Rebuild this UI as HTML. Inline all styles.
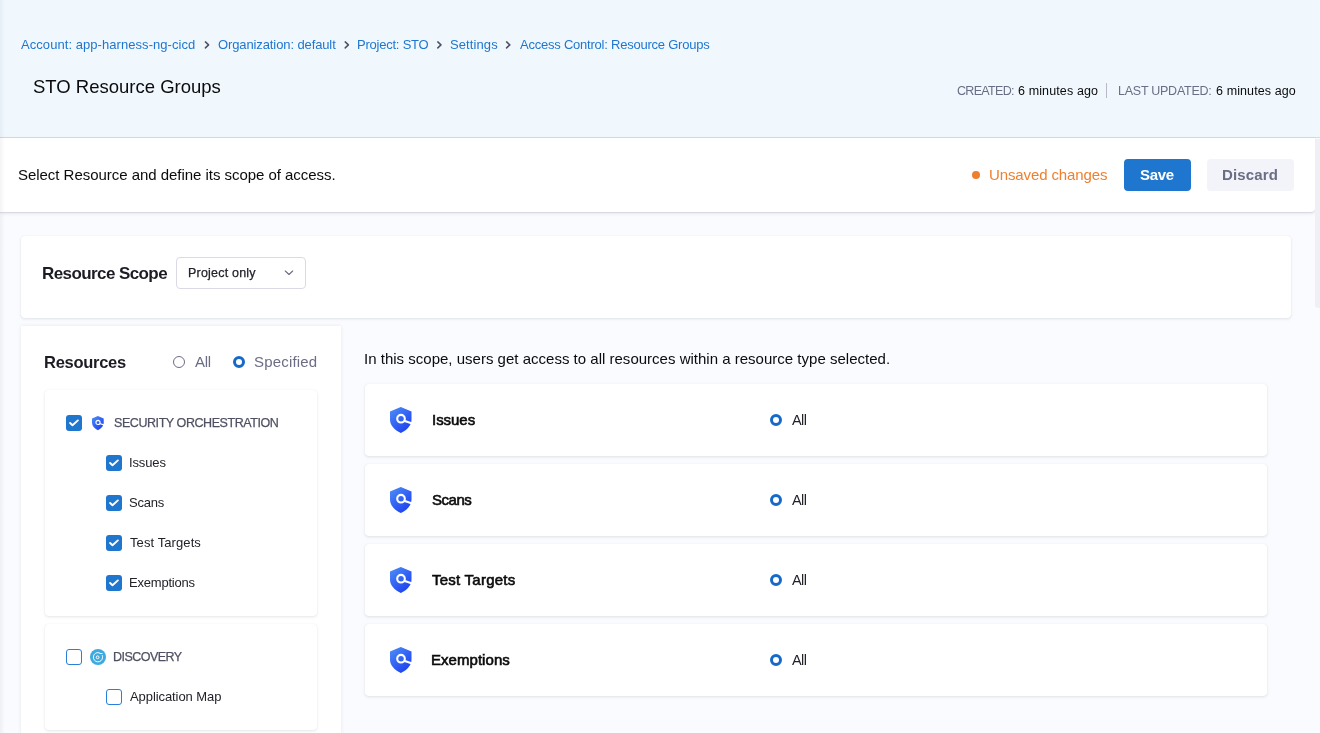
<!DOCTYPE html>
<html><head><meta charset="utf-8">
<style>
*{box-sizing:border-box;margin:0;padding:0}
html,body{width:1320px;height:733px;overflow:hidden}
body{position:relative;background:#f9fbfe;font-family:"Liberation Sans",sans-serif;color:#22222a}
.a{position:absolute;white-space:nowrap;line-height:1}
.t{position:absolute;white-space:nowrap;line-height:1;font-family:"Liberation Sans",sans-serif;will-change:transform}
svg{position:absolute;overflow:visible}
#hdr{position:absolute;left:0;top:0;width:1320px;height:138px;background:#f0f8fe;border-bottom:1px solid #d9dae6}
#bar{position:absolute;left:0;top:138px;width:1315px;height:74px;background:#fff;border-radius:0 0 4px 0;box-shadow:0 2px 4px rgba(40,41,61,.06),0 0.5px 1.5px rgba(96,97,112,.18)}
#sb{position:absolute;left:1315px;top:139px;width:6px;height:169px;background:#efeff5;border-radius:0 0 3px 3px}
.card{position:absolute;background:#fff;border-radius:4px;box-shadow:0 0 1px rgba(40,41,61,.06),0 1px 3px rgba(96,97,112,.16)}
.cb{position:absolute;width:16px;height:16px;border-radius:3px;background:#1f76cf}
.cbo{position:absolute;width:16px;height:16px;border-radius:3px;border:1px solid #2a7fd6;background:#fff}
.rad{position:absolute;width:12px;height:12px;border-radius:50%;border:3.6px solid #1769c9;background:#fff}
.rado{position:absolute;width:12px;height:12px;border-radius:50%;border:1px solid #6b6d85;background:#fff}
</style></head>
<body>
<div id="hdr"></div>
<div class="a" style="left:0;top:0;width:5px;height:733px;background:linear-gradient(to right,rgba(40,41,61,.05),rgba(40,41,61,0));z-index:5"></div>
<svg style="left:0;top:0" width="1" height="1">
<defs>
<linearGradient id="sg" x1="0" y1="0" x2="0.75" y2="1"><stop offset="0" stop-color="#4d90f8"/><stop offset="1" stop-color="#1d3ff0"/></linearGradient>
</defs></svg>
<svg style="left:0;top:0" width="1320" height="60">
<g fill="none" stroke="#4f5162" stroke-width="1.5" stroke-linecap="round" stroke-linejoin="round">
<path d="M205.4 41.9 L208.6 44.9 L205.4 47.9"/>
<path d="M345.2 41.9 L348.4 44.9 L345.2 47.9"/>
<path d="M437.8 41.9 L441 44.9 L437.8 47.9"/>
<path d="M506.6 41.9 L509.8 44.9 L506.6 47.9"/>
</g></svg>
<div class="a" style="left:1106px;top:83px;width:1px;height:15px;background:#b7b8c8"></div>

<div id="bar"></div>
<div id="sb"></div>
<div class="a" style="left:972px;top:171px;width:8px;height:8px;border-radius:50%;background:#ee7f2f"></div>
<div class="a" style="left:1124px;top:159px;width:67px;height:32px;background:#1f76cf;border-radius:4px"></div>
<div class="a" style="left:1207px;top:159px;width:87px;height:32px;background:#f3f3fa;border-radius:4px"></div>

<!-- scope card -->
<div class="card" style="left:21px;top:236px;width:1270px;height:82px"></div>
<div class="a" style="left:176px;top:257px;width:130px;height:32px;border:1px solid #d9dae6;border-radius:4px;background:#fff"></div>
<svg style="left:0;top:0" width="1" height="1"><path d="M285.3 271 L289 274.5 L292.7 271" fill="none" stroke="#6b6d85" stroke-width="1.1" stroke-linecap="round" stroke-linejoin="round"/></svg>

<!-- resources panel -->
<div class="a" style="left:21px;top:326px;width:320px;height:420px;background:#fff;box-shadow:0 0 4px rgba(40,41,61,.07),0 0 1px rgba(40,41,61,.06)"></div>
<div class="rado" style="left:173px;top:356px"></div>
<div class="rad" style="left:233px;top:356px"></div>

<div class="card" style="left:45px;top:390px;width:272px;height:226px"></div>
<div class="cb" style="left:66px;top:415px"><svg style="left:0;top:0" width="16" height="16"><path d="M4.1 8 L6.5 10.3 L11.9 5.4" fill="none" stroke="#fff" stroke-width="1.9" stroke-linecap="round" stroke-linejoin="round"/></svg></div>
<svg style="left:92px;top:415.8px" width="12" height="14.2" viewBox="0 0 22 26"><use href="#shield"/></svg>
<div class="cb" style="left:106px;top:455px"><svg style="left:0;top:0" width="16" height="16"><path d="M4.1 8 L6.5 10.3 L11.9 5.4" fill="none" stroke="#fff" stroke-width="1.9" stroke-linecap="round" stroke-linejoin="round"/></svg></div>
<div class="cb" style="left:106px;top:495px"><svg style="left:0;top:0" width="16" height="16"><path d="M4.1 8 L6.5 10.3 L11.9 5.4" fill="none" stroke="#fff" stroke-width="1.9" stroke-linecap="round" stroke-linejoin="round"/></svg></div>
<div class="cb" style="left:106px;top:535px"><svg style="left:0;top:0" width="16" height="16"><path d="M4.1 8 L6.5 10.3 L11.9 5.4" fill="none" stroke="#fff" stroke-width="1.9" stroke-linecap="round" stroke-linejoin="round"/></svg></div>
<div class="cb" style="left:106px;top:575px"><svg style="left:0;top:0" width="16" height="16"><path d="M4.1 8 L6.5 10.3 L11.9 5.4" fill="none" stroke="#fff" stroke-width="1.9" stroke-linecap="round" stroke-linejoin="round"/></svg></div>

<div class="card" style="left:45px;top:624px;width:272px;height:106px"></div>
<div class="cbo" style="left:66px;top:649px"></div>
<svg style="left:90px;top:649px" width="16" height="16" viewBox="0 0 16 16">
<circle cx="8" cy="8" r="8" fill="#3daae0"/>
<g fill="none" stroke="#fff" stroke-width="1"><path d="M10.2 4.3 A4.5 4.5 0 0 0 3.4 8 A4.5 4.5 0 0 0 12.5 8.6 A4.5 4.5 0 0 0 12.2 6.2"/><circle cx="7.6" cy="8.3" r="1.4"/><path d="M10.3 4.5 L12 4.5" stroke-linecap="round" stroke-width="1.1"/></g>
</svg>
<div class="cbo" style="left:106px;top:689px"></div>

<!-- right cards -->
<div class="card" style="left:365px;top:384px;width:902px;height:72px"></div>
<div class="card" style="left:365px;top:464px;width:902px;height:72px"></div>
<div class="card" style="left:365px;top:544px;width:902px;height:72px"></div>
<div class="card" style="left:365px;top:624px;width:902px;height:72px"></div>
<svg style="left:389.5px;top:406.5px" width="22" height="26" viewBox="0 0 22 26"><use href="#shield"/></svg>
<svg style="left:389.5px;top:486.5px" width="22" height="26" viewBox="0 0 22 26"><use href="#shield"/></svg>
<svg style="left:389.5px;top:566.5px" width="22" height="26" viewBox="0 0 22 26"><use href="#shield"/></svg>
<svg style="left:389.5px;top:646.5px" width="22" height="26" viewBox="0 0 22 26"><use href="#shield"/></svg>
<div class="rad" style="left:770px;top:414px"></div>
<div class="rad" style="left:770px;top:494px"></div>
<div class="rad" style="left:770px;top:574px"></div>
<div class="rad" style="left:770px;top:654px"></div>

<svg style="left:0;top:0" width="1" height="1"><defs>
<g id="shield">
<path d="M10.8 0 L21.5 4.5 V12.5 C21.5 18.3 17.2 23.2 10.8 26 C4.4 23.2 0 18.3 0 12.5 V4.5 Z" fill="url(#sg)"/>
<circle cx="11" cy="11.7" r="3.8" fill="none" stroke="#fff" stroke-width="2.1"/>
<path d="M14 13.8 L23 16.8" stroke="#fff" stroke-width="2.2"/>
</g></defs></svg>
<div class="t" style="left:21.4px;top:38px;font-size:13px;color:#1f76cf;letter-spacing:0.059px">Account: app-harness-ng-cicd</div>
<div class="t" style="left:217.6px;top:38px;font-size:13px;color:#1f76cf;letter-spacing:-0.110px">Organization: default</div>
<div class="t" style="left:356.8px;top:38px;font-size:13px;color:#1f76cf;letter-spacing:-0.227px">Project: STO</div>
<div class="t" style="left:449.6px;top:38px;font-size:13px;color:#1f76cf;letter-spacing:0.100px">Settings</div>
<div class="t" style="left:519.8px;top:38px;font-size:13px;color:#1f76cf;letter-spacing:-0.227px">Access Control: Resource Groups</div>
<div class="t" style="left:32.5px;top:78px;font-size:18.5px;color:#0b0b0d;letter-spacing:0.000px">STO Resource Groups</div>
<div class="t" style="left:956.6px;top:85px;font-size:12.5px;color:#6b6d85;letter-spacing:-0.686px">CREATED:</div>
<div class="t" style="left:1018.0px;top:85px;font-size:12.5px;color:#0b0b0d;letter-spacing:0.125px">6 minutes ago</div>
<div class="t" style="left:1118.4px;top:85px;font-size:12.5px;color:#6b6d85;letter-spacing:-0.250px">LAST UPDATED:</div>
<div class="t" style="left:1216.1px;top:85px;font-size:12.5px;color:#0b0b0d;letter-spacing:0.108px">6 minutes ago</div>
<div class="t" style="left:17.5px;top:167px;font-size:15px;color:#0b0b0d;letter-spacing:-0.037px">Select Resource and define its scope of access.</div>
<div class="t" style="left:989.0px;top:167px;font-size:15px;color:#ee7f2f;letter-spacing:-0.121px">Unsaved changes</div>
<div class="t" style="left:1140.0px;top:167px;font-size:15px;font-weight:bold;color:#ffffff;letter-spacing:-0.333px">Save</div>
<div class="t" style="left:1222.0px;top:167px;font-size:15px;font-weight:bold;color:#6b6d85;letter-spacing:0.167px">Discard</div>
<div class="t" style="left:41.5px;top:265px;font-size:17px;font-weight:bold;color:#1c1c24;letter-spacing:-0.585px">Resource Scope</div>
<div class="t" style="left:187.6px;top:267px;font-size:12.5px;-webkit-text-stroke:0.25px currentColor;color:#22222a;letter-spacing:0.200px">Project only</div>
<div class="t" style="left:44.2px;top:354px;font-size:16.5px;font-weight:bold;color:#1c1c24;letter-spacing:-0.287px">Resources</div>
<div class="t" style="left:195.2px;top:354px;font-size:15px;color:#6b6d85;letter-spacing:-0.350px">All</div>
<div class="t" style="left:254.0px;top:354px;font-size:15px;color:#6b6d85;letter-spacing:0.175px">Specified</div>
<div class="t" style="left:114.2px;top:417px;font-size:12.5px;-webkit-text-stroke:0.25px currentColor;color:#4f5162;letter-spacing:-0.429px">SECURITY ORCHESTRATION</div>
<div class="t" style="left:129.2px;top:456px;font-size:13px;color:#22222a;letter-spacing:-0.120px">Issues</div>
<div class="t" style="left:129.2px;top:496px;font-size:13px;color:#22222a;letter-spacing:-0.250px">Scans</div>
<div class="t" style="left:130.2px;top:536px;font-size:13px;color:#22222a;letter-spacing:0.091px">Test Targets</div>
<div class="t" style="left:129.2px;top:576px;font-size:13px;color:#22222a;letter-spacing:-0.200px">Exemptions</div>
<div class="t" style="left:113.3px;top:651px;font-size:12.5px;-webkit-text-stroke:0.25px currentColor;color:#4f5162;letter-spacing:-0.525px">DISCOVERY</div>
<div class="t" style="left:130.3px;top:690px;font-size:13px;color:#22222a;letter-spacing:-0.079px">Application Map</div>
<div class="t" style="left:364.2px;top:351px;font-size:15px;color:#0b0b0d;letter-spacing:0.010px">In this scope, users get access to all resources within a resource type selected.</div>
<div class="t" style="left:431.5px;top:412px;font-size:15px;-webkit-text-stroke:0.6px currentColor;color:#0b0b0d;letter-spacing:-0.040px">Issues</div>
<div class="t" style="left:432.3px;top:492px;font-size:15px;-webkit-text-stroke:0.6px currentColor;color:#0b0b0d;letter-spacing:-0.475px">Scans</div>
<div class="t" style="left:432.3px;top:572px;font-size:15px;-webkit-text-stroke:0.6px currentColor;color:#0b0b0d;letter-spacing:0.236px">Test Targets</div>
<div class="t" style="left:431.3px;top:652px;font-size:15px;-webkit-text-stroke:0.6px currentColor;color:#0b0b0d;letter-spacing:0.044px">Exemptions</div>
<div class="t" style="left:792.4px;top:413px;font-size:14.5px;color:#22222a;letter-spacing:-0.550px">All</div>
<div class="t" style="left:792.4px;top:493px;font-size:14.5px;color:#22222a;letter-spacing:-0.550px">All</div>
<div class="t" style="left:792.4px;top:573px;font-size:14.5px;color:#22222a;letter-spacing:-0.550px">All</div>
<div class="t" style="left:792.4px;top:653px;font-size:14.5px;color:#22222a;letter-spacing:-0.550px">All</div>
</body></html>
